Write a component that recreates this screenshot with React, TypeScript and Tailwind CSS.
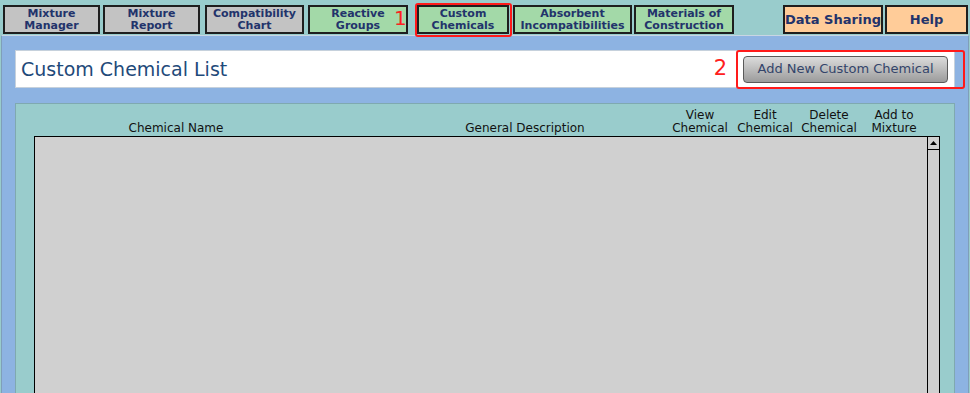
import React from 'react';

const font = { fontFamily: '"DejaVu Sans", Verdana, sans-serif' };

type Tab = { label: string[]; w: string; ml: string; tone: 'gray' | 'green' | 'orange' };

const tabs: Tab[] = [
    { label: ['Mixture', 'Manager'], w: 'w-[97px]', ml: 'ml-[3px]', tone: 'gray' },
    { label: ['Mixture', 'Report'], w: 'w-[97px]', ml: 'ml-[3px]', tone: 'gray' },
    { label: ['Compatibility', 'Chart'], w: 'w-[99px]', ml: 'ml-[5px]', tone: 'gray' },
    { label: ['Reactive', 'Groups'], w: 'w-[100px]', ml: 'ml-[4px]', tone: 'green' },
];

const tabsAfter: Tab[] = [
    { label: ['Absorbent', 'Incompatibilities'], w: 'w-[119px]', ml: 'ml-[1px]', tone: 'green' },
    { label: ['Materials of', 'Construction'], w: 'w-[100px]', ml: 'ml-[2px]', tone: 'green' },
    { label: ['Data Sharing'], w: 'w-[100px]', ml: 'ml-[49px]', tone: 'orange' },
    { label: ['Help'], w: 'w-[83px]', ml: 'ml-[2px]', tone: 'orange' },
];

const toneClass = {
    gray: 'bg-[#c3c3c3]',
    green: 'bg-[#a3d9a8]',
    orange: 'bg-[#ffcc99]',
};

function TabButton({ tab, extra = '' }: { tab: Tab; extra?: string }) {
    const single = tab.label.length === 1;
    return (
        <div
            className={`relative flex h-[29px] flex-col items-center justify-center border-2 border-[#1e1e1e] font-bold text-[#22336b] ${toneClass[tab.tone]} ${tab.w} ${extra} ${single ? 'text-[13px] leading-[15px]' : 'text-[11px] leading-[12px]'}`}
        >
            {tab.label.map((l) => (
                <span key={l} className="whitespace-nowrap">
                    {l}
                </span>
            ))}
        </div>
    );
}

export default function App() {
    return (
        <div className="h-[393px] w-[970px] overflow-hidden bg-[#99cccc]" style={font}>
            {/* tab bar */}
            <div className="flex h-[35px] items-start">
                {tabs.map((t) => (
                    <TabButton key={t.label.join()} tab={t} extra={`${t.ml} mt-[5px]`} />
                ))}
                <div className="relative z-10 ml-[7px] mt-[3px] rounded-[3px] border-2 border-[#ff1a1a] pb-[1px] pr-[1px]">
                    <span className="absolute left-[-23px] top-[2px] text-[20px] leading-[22px] text-[#ff2020]">1</span>
                    <TabButton tab={{ label: ['Custom', 'Chemicals'], w: 'w-[92px]', ml: '', tone: 'green' }} />
                </div>
                {tabsAfter.map((t) => (
                    <TabButton key={t.label.join()} tab={t} extra={`${t.ml} mt-[5px]`} />
                ))}
            </div>

            {/* main panel */}
            <div className="ml-[1px] h-[400px] w-[968px] border border-[#7f9fb9] border-t-[#c9d6e3] bg-[#8db3e2] px-[13px] pt-[14px]">
                <div className="relative flex h-[38px] w-[940px] items-center justify-between border border-[#c6d1dc] bg-white pl-[5px] pr-[6px]">
                    <h1 className="text-[19px] text-[#1f4a7a]">Custom Chemical List</h1>
                    <div className="flex items-center">
                        <span className="mr-[16px] text-[21px] text-[#ff2020]">2</span>
                        <button className="h-[27px] w-[205px] rounded-[4px] border border-[#5a5a5a] bg-gradient-to-b from-[#dcdcdc] to-[#9c9c9c] text-[13px] text-[#33446a]">
                            Add New Custom Chemical
                        </button>
                    </div>
                    <div className="absolute left-[720px] top-[-1px] h-[39px] w-[229px] rounded-[3px] border-2 border-[#ff1a1a]" />
                </div>

                <div className="mt-[15px] w-[940px] border border-[#7fa9b0] bg-[#99cccc] pl-[18px] pr-[14px]">
                    <div className="flex h-[32px] items-end pb-[1px] text-center text-[12px] leading-[13px] text-[#111]">
                        <div className="w-[284px]">Chemical Name</div>
                        <div className="w-[350px] pl-[64px]">General Description</div>
                        <div className="w-[64px]">
                            View
                            <br />
                            Chemical
                        </div>
                        <div className="w-[66px]">
                            Edit
                            <br />
                            Chemical
                        </div>
                        <div className="w-[62px]">
                            Delete
                            <br />
                            Chemical
                        </div>
                        <div className="w-[68px]">
                            Add to
                            <br />
                            Mixture
                        </div>
                    </div>
                    <div className="flex h-[300px] border-l border-t border-black bg-[#d0d0d0]">
                        <div className="flex-1" />
                        <div className="w-[13px] border-x border-black">
                            <div className="flex h-[13px] items-center justify-center border-b border-black">
                                <svg width="7" height="4" viewBox="0 0 7 4">
                                    <path d="M0 4 L3.5 0 L7 4 Z" fill="#000" />
                                </svg>
                            </div>
                        </div>
                    </div>
                </div>
            </div>
        </div>
    );
}
